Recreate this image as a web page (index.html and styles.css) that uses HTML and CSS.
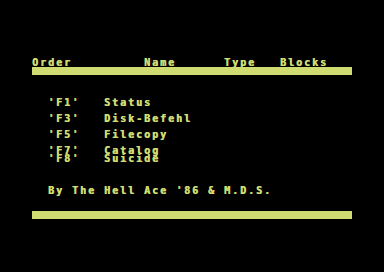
FILE: index.html
```html
<!DOCTYPE html>
<html>
<head>
	<title>Order Menu</title>
	<meta charset="utf-8">
	<link rel="stylesheet" href="styles.css">
</head>
<body>

	<div class="screen">
		<div class="row r3">Order         Name      Type   Blocks</div>
		<div class="bar r4"></div>
		<div class="row r8">  'F1'   Status</div>
		<div class="row r10">  'F3'   Disk-Befehl</div>
		<div class="row r12">  'F5'   Filecopy</div>
		<div class="row r14">  'F7'   Catalog</div>
		<div class="row r15">  'F8'   Suicide</div>
		<div class="row r19">  By The Hell Ace '86 &amp; M.D.S.</div>
		<div class="bar r22"></div>
	</div>

</body>
</html>
```

FILE: styles.css
```css
html,
body {
	margin: 0;
	background-color: #000000;
}

body {
	width: 384px;
	height: 272px;
	overflow: hidden;
}

/* the 40x25 text area, 8px character cells */
.screen {
	display: grid;
	grid-template-rows: repeat(25, 8px);
	width: 320px;
	height: 200px;
	margin: 35px 0 0 32px;
	color: #d0dc71;
	font-family: "DejaVu Sans Mono", "Liberation Mono", monospace;
	font-weight: bold;
	font-size: 10px;
	line-height: 8px;
	letter-spacing: calc(8px - 1ch);
}

.row {
	white-space: pre;
	height: 8px;
	text-shadow: 0.6px 0 0 #d0dc71;
}

.bar {
	background-color: #d0dc71;
	height: 8px;
}

.r3 { grid-row: 4; }
.r4 { grid-row: 5; }
.r8 { grid-row: 9; }
.r10 { grid-row: 11; }
.r12 { grid-row: 13; }
.r14 { grid-row: 15; }
.r15 { grid-row: 16; }
.r19 { grid-row: 20; }
.r22 { grid-row: 23; }
```
